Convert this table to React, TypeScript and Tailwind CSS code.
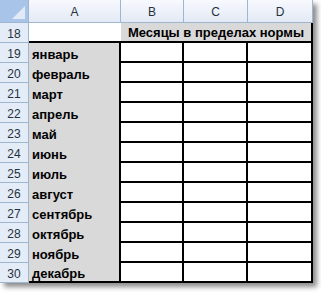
import React from 'react';

const months = [
  'январь',
  'февраль',
  'март',
  'апрель',
  'май',
  'июнь',
  'июль',
  'август',
  'сентябрь',
  'октябрь',
  'ноябрь',
  'декабрь',
];

const cols = 'grid grid-cols-[29px_92px_63px_64px_65px] grid-rows-[20px] overflow-hidden';

function RowHead({ n }: { n: number }) {
  return (
    <div className="flex items-center justify-center border-r border-b border-[#9eb6ce] bg-[#e4ecf7] pt-[2px] text-[12px] leading-[14px] text-[#27313d]">
      {n}
    </div>
  );
}

// empty white cell with black grid lines
function Cell() {
  return <div className="border-r-2 border-b-2 border-black bg-white" />;
}

export default function App() {
  return (
    <div className="h-[293px] w-[321px] bg-white font-['Liberation_Sans',Arial,sans-serif]">
      <div className="w-[313px] shadow-[4px_4px_5px_rgba(0,0,0,0.45)]">
        {/* column headers */}
        <div className="grid h-[23px] grid-cols-[29px_92px_63px_64px_65px] grid-rows-[23px]">
          <div className="relative border-r border-b border-[#9eb6ce] bg-[#a9c4e9]">
            <svg className="absolute right-[3px] bottom-[3px]" width="13" height="13" viewBox="0 0 13 13">
              <polygon points="13,0 13,13 0,13" fill="#e2eaf6" />
            </svg>
          </div>
          {['A', 'B', 'C', 'D'].map((c) => (
            <div
              key={c}
              className="flex items-center justify-center border-r border-b border-[#9eb6ce] bg-gradient-to-b from-[#f7f9fd] to-[#e3eaf5] pt-[1px] text-[12px] leading-[14px] text-[#27313d]"
            >
              {c}
            </div>
          ))}
        </div>

        {/* row 18 */}
        <div className={cols}>
          <RowHead n={18} />
          <div className="border-b-2 border-black bg-white" />
          <div className="col-span-3 flex items-center justify-center border-r-2 border-b-2 border-black bg-[#d9d9d9] pt-[1px] text-[13px] leading-[15px] font-bold text-black">
            Месяцы в пределах нормы
          </div>
        </div>

        {months.map((m, i) => {
          const last = i === months.length - 1;
          return (
            <div key={m} className={cols}>
              <RowHead n={19 + i} />
              <div
                className={`flex items-center border-r-2 border-black bg-[#d9d9d9] pt-[2px] pl-[3px] text-[13px] leading-[15px] font-bold text-black ${
                  last ? 'border-b-2' : ''
                }`}
              >
                {m}
              </div>
              <Cell />
              <Cell />
              <Cell />
            </div>
          );
        })}
      </div>
    </div>
  );
}
